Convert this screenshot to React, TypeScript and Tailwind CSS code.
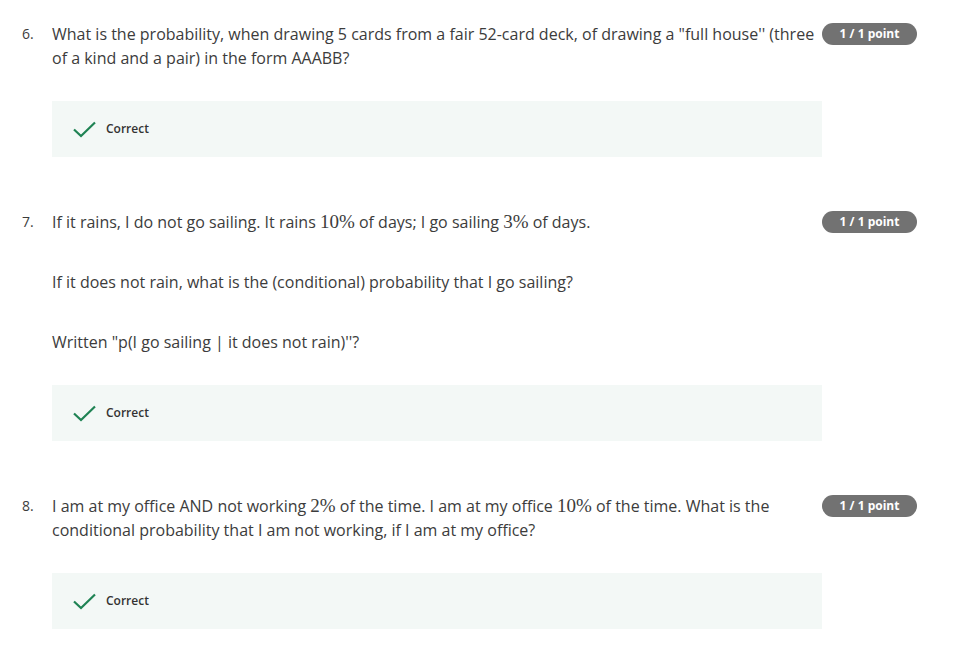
const sans = { fontFamily: '"Open Sans", "Noto Sans", sans-serif' };

function M({ children }: { children: React.ReactNode }) {
  return (
    <span className="text-[19px]" style={{ fontFamily: '"Liberation Serif", "DejaVu Serif", serif', lineHeight: "1" }}>
      {children}
    </span>
  );
}

function Correct() {
  return (
    <div className="mt-[31px] flex h-[56px] items-center bg-[#f3f8f6] pl-[21px]">
      <svg width="23" height="17" viewBox="0 0 23 17" className="mt-[1px]">
        <path d="M1 8.5 L8 15 L22 1.5" fill="none" stroke="#1f8354" strokeWidth="2.2" />
      </svg>
      <span className="ml-[10px] text-[12px] font-semibold text-[#333]">Correct</span>
    </div>
  );
}

function Question({ n, children }: { n: number; children: React.ReactNode }) {
  return (
    <div className="flex">
      <div className="w-[30px] shrink-0 text-[14px] leading-6 text-[#3c3c3c]">{n}.</div>
      <div className="w-[770px] shrink-0">{children}</div>
      <div className="mt-[1px] flex h-[22px] w-[95px] shrink-0 items-center justify-center rounded-full bg-[#727272] text-[12px] font-bold text-white">
        1 / 1 point
      </div>
    </div>
  );
}

export default function App() {
  return (
    <div className="min-h-[650px] bg-white pl-[22px] pt-[22px] text-[16px] leading-6 text-[#3c3c3c]" style={sans}>
      <Question n={6}>
        <p className="pr-[6px]">
          What is the probability, when drawing 5 cards from a fair 52-card deck, of drawing a "full house'' (three of a kind and a pair) in the form AAABB?
        </p>
        <Correct />
      </Question>
      <div className="h-[53px]" />
      <Question n={7}>
        <p>
          If it rains, I do not go sailing. It rains <M>10%</M> of days; I go sailing <M>3%</M> of days.
        </p>
        <p className="mt-[36px]">If it does not rain, what is the (conditional) probability that I go sailing?</p>
        <p className="mt-[36px]">Written "p(I go sailing | it does not rain)''?</p>
        <Correct />
      </Question>
      <div className="h-[53px]" />
      <Question n={8}>
        <p className="pr-[40px]">
          I am at my office AND not working <M>2%</M> of the time. I am at my office <M>10%</M> of the time. What is the conditional probability that I am not working, if I am at my office?
        </p>
        <Correct />
      </Question>
    </div>
  );
}
